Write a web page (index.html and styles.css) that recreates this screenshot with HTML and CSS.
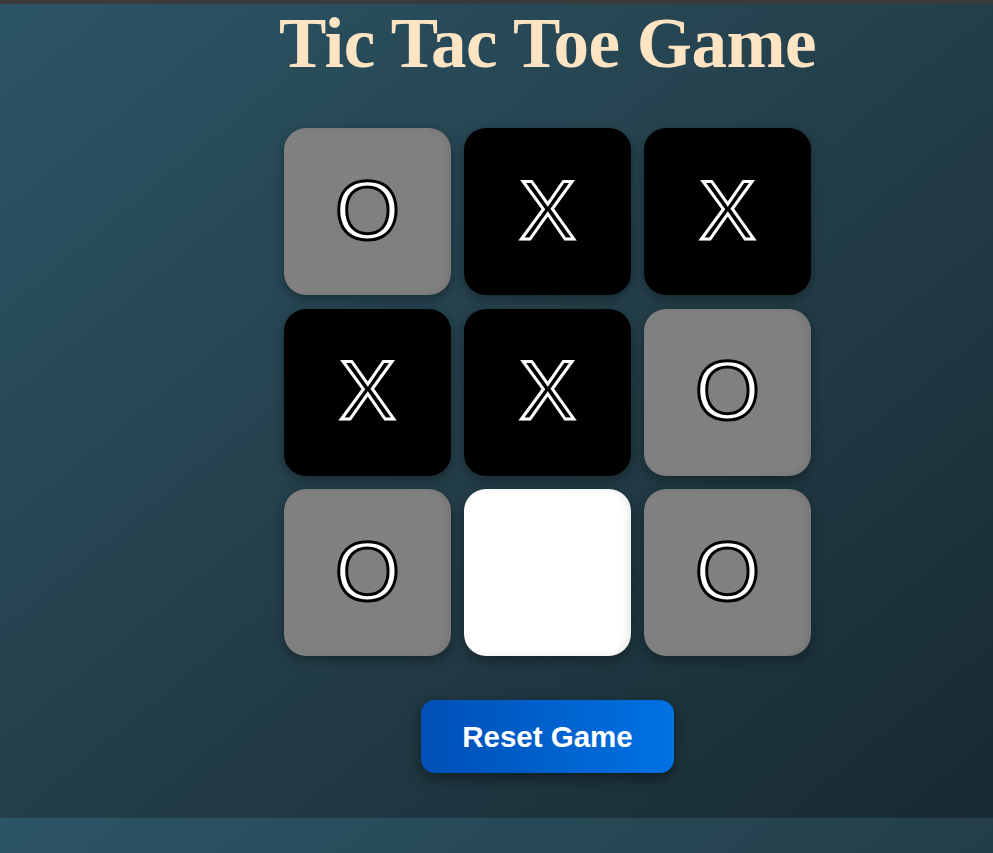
FILE: index.html
```html
<!DOCTYPE html>
<html lang="en">
<head>
<meta charset="utf-8">
<title>Tic Tac Toe Game</title>
<link rel="stylesheet" href="styles.css">
</head>
<body>
<div class="topbar"></div>
<main class="game">
  <h1 class="title">Tic Tac Toe Game</h1>
  <div class="board">
    <div class="cell cell-o">O</div>
    <div class="cell cell-x">X</div>
    <div class="cell cell-x">X</div>
    <div class="cell cell-x">X</div>
    <div class="cell cell-x">X</div>
    <div class="cell cell-o">O</div>
    <div class="cell cell-o">O</div>
    <div class="cell cell-empty"></div>
    <div class="cell cell-o">O</div>
  </div>
  <button class="reset">Reset Game</button>
</main>
</body>
</html>
```
FILE: styles.css
```css
html {
  height: 818px;
}
body {
  margin: 0;
  height: 818px;
  background: linear-gradient(to right bottom, #2c5566, #243f4a, #172a32);
  font-family: "Liberation Sans", Arial, sans-serif;
}
.topbar {
  height: 4px;
  background: #3b3b3b;
}
.game {
  display: flex;
  flex-direction: column;
  align-items: center;
  padding-left: 102px;
}
.title {
  margin: 0;
  font-family: "Liberation Serif", "Times New Roman", serif;
  font-weight: bold;
  font-size: 71px;
  line-height: 78px;
  letter-spacing: -0.5px;
  color: #ffe4c4;
}
.board {
  margin-top: 46px;
  display: grid;
  grid-template-columns: repeat(3, 167px);
  grid-auto-rows: 167px;
  gap: 13.5px 13px;
}
.cell {
  border-radius: 22px;
  display: flex;
  align-items: center;
  justify-content: center;
  font-family: "Liberation Sans", Arial, sans-serif;
  font-size: 84px;
  padding-bottom: 3px;
  box-shadow: 0 4px 12px rgba(0, 0, 0, 0.35), inset -4px 0 6px rgba(0, 0, 0, 0.08);
}
.cell-o {
  background: #808080;
  color: #fff;
  -webkit-text-stroke: 3px #000;
}
.cell-x {
  background: #000;
  color: #000;
  -webkit-text-stroke: 3px #fff;
}
.cell-empty {
  background: #fff;
}
.reset {
  margin-top: 44px;
  width: 253px;
  height: 73px;
  border: none;
  border-radius: 14px;
  background: linear-gradient(to right, #004fb6, #0072e3);
  color: #fff;
  font-family: "Liberation Sans", Arial, sans-serif;
  font-weight: bold;
  font-size: 29.5px;
  box-shadow: 0 5px 14px rgba(0, 0, 0, 0.45);
}
```
